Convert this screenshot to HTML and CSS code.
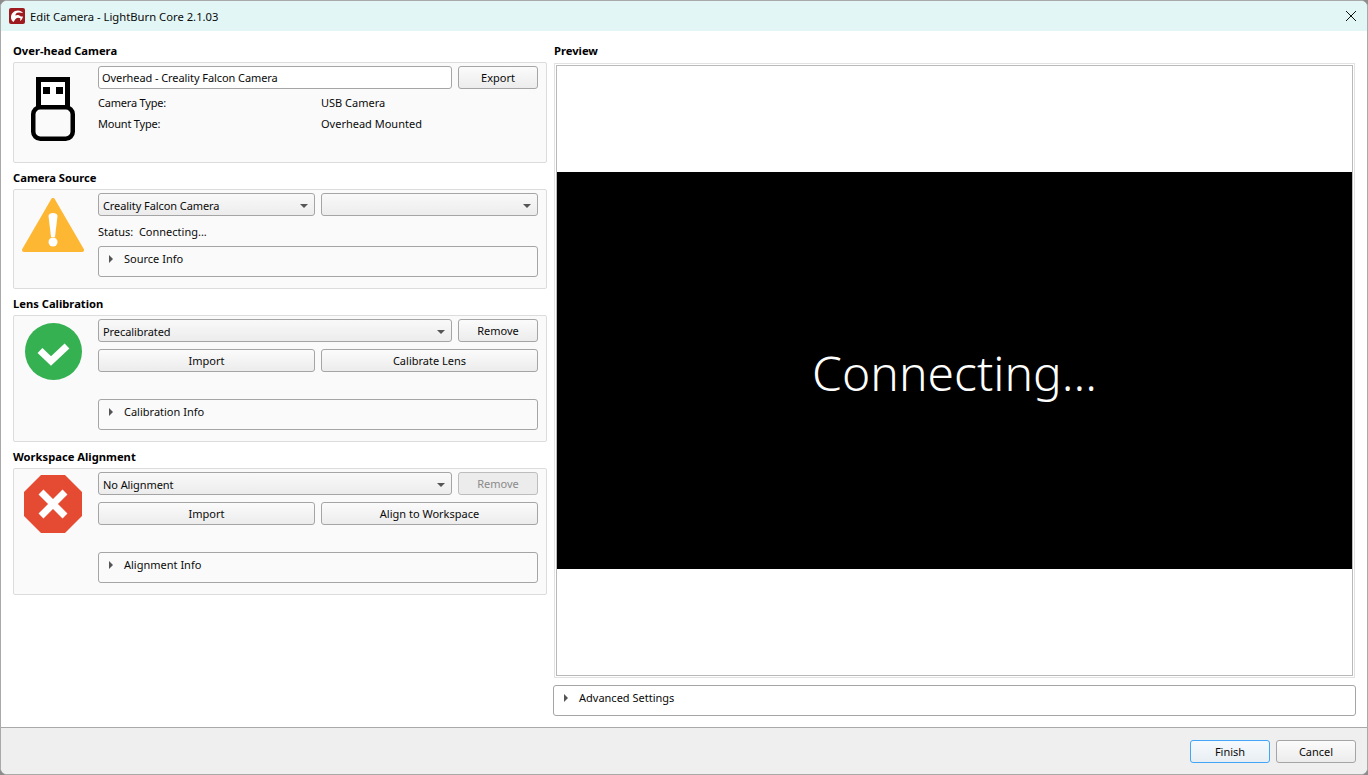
FILE: index.html
```html
<!DOCTYPE html>
<html lang="en">
<head>
    <meta charset="UTF-8">
    <meta name="viewport" content="width=device-width, initial-scale=1.0">
    <title>Edit Camera - LightBurn Core 2.1.03</title>
    <link rel="stylesheet" href="styles.css">
</head>
<body>
    <div class="window">
        <div class="titlebar">
            <svg class="app-icon" viewBox="0 0 16 16">
                <rect width="16" height="16" rx="2" fill="#9e1b1f"/>
                <path d="M2 10C1.500 6 5 2.500 9 2.500c2 0 4 1 5 2.500l-4-.5C7.500 4.500 6 6 6.500 7.500 8 6.500 10 7 11 8c1 .7 2 .7 3 .5-.5 2-1.500 3.500-3 4.500l.5-2.500c-1.500-1-3.500-1-5 .5L4.500 14C3 13 2.200 11.500 2 10z" fill="#fff"/>
            </svg>
            <span class="title">Edit Camera - LightBurn Core 2.1.03</span>
            <svg class="close-icon" viewBox="0 0 10 10">
                <path d="M0 0L10 10M10 0L0 10" stroke="#111" stroke-width="1" fill="none"/>
            </svg>
        </div>

        <div class="main">
            <div class="left-pane">
                <h3>Over-head Camera</h3>
                <div class="box box-head">
                    <div class="icon-col">
                        <svg class="status-icon" width="44" height="64" viewBox="0 0 44 64">
                            <rect x="7.500" y="2.500" width="29" height="30" fill="#fff" stroke="#000" stroke-width="5"/>
                            <rect x="12" y="10" width="7" height="7" fill="#000"/>
                            <rect x="25" y="10" width="7" height="7" fill="#000"/>
                            <rect x="2.250" y="30.250" width="39.500" height="31.500" rx="7" fill="#fafafa" stroke="#000" stroke-width="4.500"/>
                        </svg>
                    </div>
                    <div class="content">
                        <div class="row">
                            <div class="input">Overhead - Creality Falcon Camera</div>
                            <button class="btn btn-side">Export</button>
                        </div>
                        <div class="info-row"><span>Camera Type:</span><span>USB Camera</span></div>
                        <div class="info-row"><span>Mount Type:</span><span>Overhead Mounted</span></div>
                    </div>
                </div>

                <h3>Camera Source</h3>
                <div class="box box-source">
                    <div class="icon-col">
                        <svg class="status-icon" width="62" height="54" viewBox="0 0 62 54">
                            <path d="M31 2L60 52H2z" fill="#fdb733" stroke="#fdb733" stroke-width="4" stroke-linejoin="round"/>
                            <path d="M26.500 18c0-4 9-4 9 0l-2.500 21h-4z" fill="#fff"/>
                            <circle cx="31" cy="44" r="4.500" fill="#fff"/>
                        </svg>
                    </div>
                    <div class="content">
                        <div class="row">
                            <div class="select">Creality Falcon Camera</div>
                            <div class="select"></div>
                        </div>
                        <div class="status">Status:&nbsp; Connecting...</div>
                        <div class="group"><span class="arrow"></span>Source Info</div>
                    </div>
                </div>

                <h3>Lens Calibration</h3>
                <div class="box box-tall">
                    <div class="icon-col">
                        <svg class="status-icon" width="57" height="57" viewBox="0 0 57 57">
                            <circle cx="28.500" cy="28.500" r="28.500" fill="#35b152"/>
                            <path d="M15 27.500l11 10.500L42 23" fill="none" stroke="#fff" stroke-width="7"/>
                        </svg>
                    </div>
                    <div class="content">
                        <div class="row">
                            <div class="select">Precalibrated</div>
                            <button class="btn btn-side">Remove</button>
                        </div>
                        <div class="row row-btns">
                            <button class="btn">Import</button>
                            <button class="btn">Calibrate Lens</button>
                        </div>
                        <div class="group group-low"><span class="arrow"></span>Calibration Info</div>
                    </div>
                </div>

                <h3>Workspace Alignment</h3>
                <div class="box box-tall box-align">
                    <div class="icon-col">
                        <svg class="status-icon" width="58" height="58" viewBox="0 0 58 58">
                            <path d="M17 0h24l17 17v24L41 58H17L0 41V17z" fill="#e54b32"/>
                            <path d="M17 17l24 24M41 17L17 41" fill="none" stroke="#fff" stroke-width="7"/>
                        </svg>
                    </div>
                    <div class="content">
                        <div class="row">
                            <div class="select">No Alignment</div>
                            <button class="btn btn-side" disabled>Remove</button>
                        </div>
                        <div class="row row-btns">
                            <button class="btn">Import</button>
                            <button class="btn">Align to Workspace</button>
                        </div>
                        <div class="group group-low"><span class="arrow"></span>Alignment Info</div>
                    </div>
                </div>
            </div>

            <div class="right-pane">
                <h3 class="preview-label">Preview</h3>
                <div class="preview">
                    <div class="preview-inner">
                        <div class="video">Connecting...</div>
                    </div>
                </div>
                <div class="group group-wide"><span class="arrow"></span>Advanced Settings</div>
            </div>
        </div>

        <div class="footer">
            <button class="btn btn-footer btn-default">Finish</button>
            <button class="btn btn-footer">Cancel</button>
        </div>
    </div>
</body>
</html>
```

FILE: styles.css
```css
* {
    box-sizing: border-box;
}
html, body {
    margin: 0;
    height: 100%;
    overflow: hidden;
}
body {
    background-color: #8c8c8c;
    font-family: "Noto Sans", "Open Sans", sans-serif;
    font-size: 11px;
    color: #0a0a0a;
}
.window {
    width: 1368px;
    height: 775px;
    display: flex;
    flex-direction: column;
    background: white;
    border: 1px solid #a9a9a9;
    border-radius: 7px;
    overflow: hidden;
}
.titlebar {
    height: 30px;
    flex: none;
    display: flex;
    align-items: center;
    padding-left: 8px;
    background-color: #e2f6f6;
}
.app-icon {
    width: 16px;
    height: 16px;
}
.title {
    margin-left: 5px;
    font-size: 11.250px;
}
.close-icon {
    width: 10px;
    height: 10px;
    margin-left: auto;
    margin-right: 11px;
}
.main {
    flex: 1;
    display: flex;
    min-height: 0;
}
.left-pane {
    width: 546px;
    flex: none;
    padding: 12px 0 0 12px;
}
h3 {
    margin: 0;
    height: 19px;
    line-height: 16px;
    font-size: 11.200px;
    font-weight: 700;
    color: #000;
}
.box {
    display: flex;
    height: 101px;
    margin-bottom: 7px;
    background-color: #fafafa;
    border: 1px solid #dcdcdc;
    border-radius: 2px;
}
.box-source {
    height: 100px;
}
.box-tall {
    height: 127px;
}
.icon-col {
    width: 84px;
    flex: none;
    display: flex;
    justify-content: center;
    align-items: flex-start;
    padding-right: 6px;
}
.box-head .status-icon {
    margin-top: 14px;
}
.box-source .status-icon {
    margin-top: 8px;
}
.box-tall .status-icon {
    margin-top: 7px;
}
.box-align .status-icon {
    margin-top: 6px;
}
.content {
    flex: none;
    width: 440px;
    padding-top: 3px;
}
.row {
    display: flex;
    gap: 6px;
    height: 23px;
}
.row-btns {
    margin-top: 7px;
}
.input, .select, .btn, .group {
    border: 1px solid #a5a5a5;
    border-radius: 3px;
}
.input {
    flex: 1;
    padding-left: 3px;
    line-height: 21px;
    letter-spacing: -0.080px;
    background: white;
}
.select {
    flex: 1;
    position: relative;
    padding-left: 4px;
    line-height: 23px;
    letter-spacing: -0.080px;
    background: linear-gradient(#f9f9f9, #ececec);
}
.select::after {
    content: "";
    position: absolute;
    right: 6px;
    top: 10px;
    border-left: 4px solid transparent;
    border-right: 4px solid transparent;
    border-top: 4px solid #555;
}
.btn {
    flex: 1;
    height: 23px;
    padding: 0;
    font-family: inherit;
    font-size: 11px;
    color: #0a0a0a;
    background: linear-gradient(#fbfbfb, #ececec);
}
.btn-side {
    flex: none;
    width: 80px;
}
.btn:disabled {
    color: #8a8a8a;
    background: #ececec;
    border-color: #bdbdbd;
}
.info-row {
    display: flex;
    height: 21px;
    line-height: 17px;
}
.row + .info-row {
    margin-top: 5px;
}
.info-row span:first-child {
    width: 223px;
    letter-spacing: -0.200px;
}
.status {
    height: 30px;
    line-height: 32px;
}
.group {
    position: relative;
    height: 31px;
    padding-left: 25px;
    line-height: 23px;
    background: transparent;
}
.group-low {
    margin-top: 27px;
}
.arrow {
    position: absolute;
    left: 10px;
    top: 8px;
    border-top: 4px solid transparent;
    border-bottom: 4px solid transparent;
    border-left: 4px solid #555;
}
.right-pane {
    flex: 1;
    min-width: 0;
    padding: 12px 11px 0 6px;
    display: flex;
    flex-direction: column;
}
.preview-label {
    height: 20px;
    padding-left: 1px;
}
.preview {
    height: 615px;
    margin: 0 1px 7px 1px;
    padding: 1px;
    border: 1px solid #e2e2e2;
    background: white;
}
.preview-inner {
    height: 100%;
    display: flex;
    align-items: center;
    border: 1px solid #b9b9b9;
}
.video {
    width: 100%;
    height: 397px;
    display: flex;
    align-items: center;
    justify-content: center;
    padding-top: 5px;
    background: black;
    color: white;
    font-size: 48px;
    font-weight: 300;
    line-height: 1;
}
.group-wide {
    flex: none;
}
.footer {
    height: 47px;
    flex: none;
    display: flex;
    justify-content: flex-end;
    gap: 6px;
    padding: 12px 11px 0 0;
    background-color: #efefef;
    border-top: 1px solid #a9a9a9;
}
.btn-footer {
    flex: none;
    width: 80px;
}
.btn-default {
    border-color: #42a5f5;
    background: linear-gradient(#f6fafd, #e8eef3);
}
```
